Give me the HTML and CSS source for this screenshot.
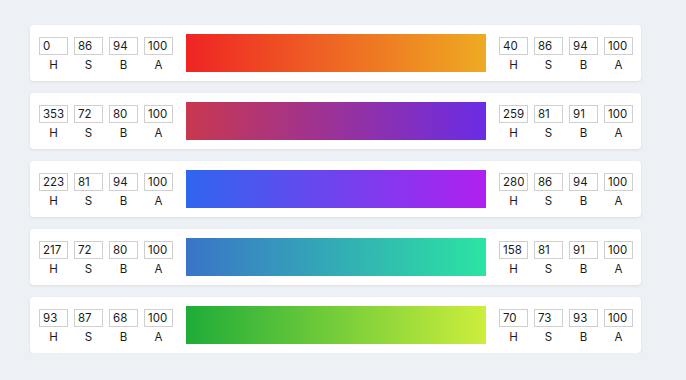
FILE: index.html
```html
<!DOCTYPE html>
<html lang="en">
<head>
    <meta charset="UTF-8">
    <title>Gradient Picker</title>
    <link rel="stylesheet" href="styles.css">
</head>
<body>
    <div class="list">
        <div class="card">
            <div class="hsba">
                <div class="field"><input type="text" value="0"><span>H</span></div>
                <div class="field"><input type="text" value="86"><span>S</span></div>
                <div class="field"><input type="text" value="94"><span>B</span></div>
                <div class="field"><input type="text" value="100"><span>A</span></div>
            </div>
            <div class="bar g1"></div>
            <div class="hsba">
                <div class="field"><input type="text" value="40"><span>H</span></div>
                <div class="field"><input type="text" value="86"><span>S</span></div>
                <div class="field"><input type="text" value="94"><span>B</span></div>
                <div class="field"><input type="text" value="100"><span>A</span></div>
            </div>
        </div>
        <div class="card">
            <div class="hsba">
                <div class="field"><input type="text" value="353"><span>H</span></div>
                <div class="field"><input type="text" value="72"><span>S</span></div>
                <div class="field"><input type="text" value="80"><span>B</span></div>
                <div class="field"><input type="text" value="100"><span>A</span></div>
            </div>
            <div class="bar g2"></div>
            <div class="hsba">
                <div class="field"><input type="text" value="259"><span>H</span></div>
                <div class="field"><input type="text" value="81"><span>S</span></div>
                <div class="field"><input type="text" value="91"><span>B</span></div>
                <div class="field"><input type="text" value="100"><span>A</span></div>
            </div>
        </div>
        <div class="card">
            <div class="hsba">
                <div class="field"><input type="text" value="223"><span>H</span></div>
                <div class="field"><input type="text" value="81"><span>S</span></div>
                <div class="field"><input type="text" value="94"><span>B</span></div>
                <div class="field"><input type="text" value="100"><span>A</span></div>
            </div>
            <div class="bar g3"></div>
            <div class="hsba">
                <div class="field"><input type="text" value="280"><span>H</span></div>
                <div class="field"><input type="text" value="86"><span>S</span></div>
                <div class="field"><input type="text" value="94"><span>B</span></div>
                <div class="field"><input type="text" value="100"><span>A</span></div>
            </div>
        </div>
        <div class="card">
            <div class="hsba">
                <div class="field"><input type="text" value="217"><span>H</span></div>
                <div class="field"><input type="text" value="72"><span>S</span></div>
                <div class="field"><input type="text" value="80"><span>B</span></div>
                <div class="field"><input type="text" value="100"><span>A</span></div>
            </div>
            <div class="bar g4"></div>
            <div class="hsba">
                <div class="field"><input type="text" value="158"><span>H</span></div>
                <div class="field"><input type="text" value="81"><span>S</span></div>
                <div class="field"><input type="text" value="91"><span>B</span></div>
                <div class="field"><input type="text" value="100"><span>A</span></div>
            </div>
        </div>
        <div class="card">
            <div class="hsba">
                <div class="field"><input type="text" value="93"><span>H</span></div>
                <div class="field"><input type="text" value="87"><span>S</span></div>
                <div class="field"><input type="text" value="68"><span>B</span></div>
                <div class="field"><input type="text" value="100"><span>A</span></div>
            </div>
            <div class="bar g5"></div>
            <div class="hsba">
                <div class="field"><input type="text" value="70"><span>H</span></div>
                <div class="field"><input type="text" value="73"><span>S</span></div>
                <div class="field"><input type="text" value="93"><span>B</span></div>
                <div class="field"><input type="text" value="100"><span>A</span></div>
            </div>
        </div>
    </div>
</body>
</html>
```

FILE: styles.css
```css
body {
    font-family: Inter, "Noto Sans", sans-serif;
    background-color: #edf0f4;
    margin: 0;
    padding: 25px 0 0 30px;
}
.list {
    display: flex;
    flex-direction: column;
    gap: 12px;
    width: 611px;
}
.card {
    background-color: #fff;
    border-radius: 4px;
    box-shadow: 0 1px 3px rgba(0, 0, 0, 0.08);
    height: 56px;
    box-sizing: border-box;
    padding: 0 8px 0 9px;
    display: flex;
    align-items: center;
    gap: 13px;
}
.hsba {
    display: flex;
    gap: 6px;
    margin-top: 3px;
}
.field {
    display: flex;
    flex-direction: column;
    align-items: center;
    gap: 4px;
}
.field input {
    width: 29px;
    height: 18px;
    box-sizing: border-box;
    border: 1px solid #cfcfcf;
    border-radius: 0;
    padding: 0 3px;
    font-family: inherit;
    font-size: 11.5px;
    color: #1a1a1a;
    outline: none;
    margin: 0;
}
.field span {
    font-size: 11.5px;
    line-height: 13px;
    color: #1a1a1a;
}
.bar {
    width: 300px;
    height: 38px;
}
.g1 { background: linear-gradient(to right, #ef2424, #eeab22); }
.g2 { background: linear-gradient(to right, #c8384f, #6a2ce6); }
.g3 { background: linear-gradient(to right, #2f66ee, #b020ef); }
.g4 { background: linear-gradient(to right, #3a74c8, #2ce4a2); }
.g5 { background: linear-gradient(to right, #1eac38, #cdee3c); }
```
